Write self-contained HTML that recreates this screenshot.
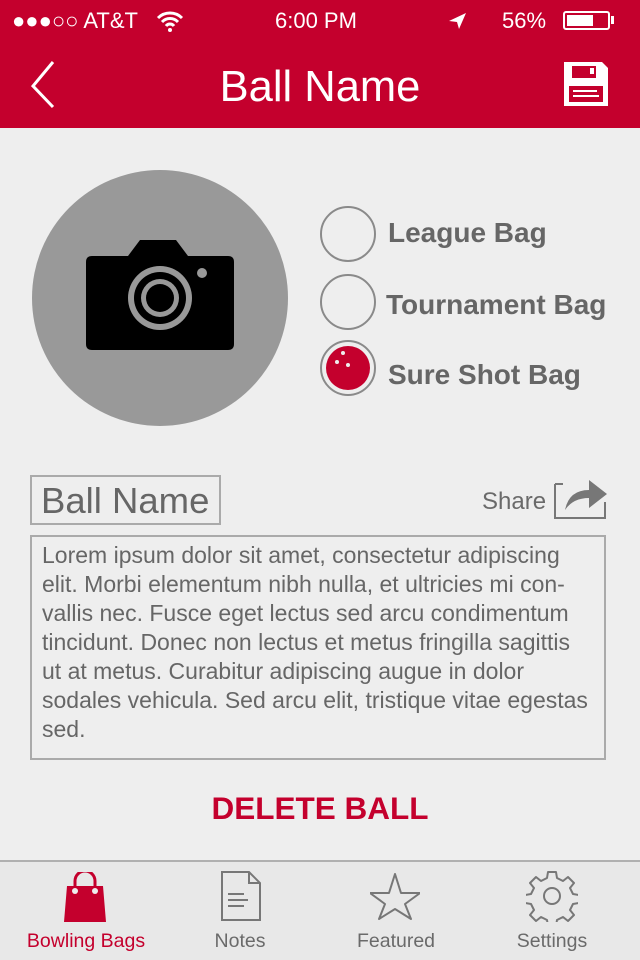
<!DOCTYPE html>
<html><head><meta charset="utf-8"><style>
*{margin:0;padding:0;box-sizing:border-box}
body{width:640px;height:960px;background:#eeeeee;font-family:"Liberation Sans",sans-serif;position:relative;overflow:hidden}
.abs{position:absolute}
.hdr{left:0;top:0;width:640px;height:128px;background:#c4002d;color:#fff}
.radio{width:56px;height:56px;border-radius:50%;border:2px solid #8a8a8a;left:320px}
.rl{left:388px;font-weight:bold;font-size:28px;color:#666}
.tab{top:930px;font-size:19.5px;color:#6a6a6a;text-align:center;width:160px}
</style></head><body>
<div class="abs hdr">
 <div class="abs" style="left:12px;top:8px;font-size:22px">●●●○○ AT&amp;T</div>
 <svg class="abs" style="left:155px;top:10px" width="30" height="22" viewBox="0 0 30 22"><path d="M3 8a17 17 0 0 1 24 0M7 12a11 11 0 0 1 16 0M11 16a5 5 0 0 1 8 0" stroke="#fff" stroke-width="3" fill="none"/><circle cx="15" cy="20" r="2" fill="#fff"/></svg>
 <div class="abs" style="left:275px;top:8px;font-size:22px">6:00 PM</div>
 <svg class="abs" style="left:448px;top:12px" width="20" height="18"><path d="M18 1L1 9l8 1 2 7z" fill="#fff"/></svg>
 <div class="abs" style="left:502px;top:8px;font-size:22px">56%</div>
 <div class="abs" style="left:563px;top:11px;width:47px;height:19px;border:2px solid #fff;border-radius:3px"><div style="margin:2px;width:26px;height:11px;background:#fff"></div></div>
 <div class="abs" style="left:611px;top:16px;width:3px;height:8px;background:#fff"></div>
 <svg class="abs" style="left:28px;top:60px" width="30" height="50"><path d="M25 2L5 26l20 21" stroke="#fff" stroke-width="3" fill="none"/></svg>
 <div class="abs" style="left:0;width:640px;top:63px;text-align:center;font-size:43.5px">Ball Name</div>
 <svg class="abs" style="left:562px;top:60px" width="48" height="48"><path d="M2 2h38l6 6v38H2z" fill="#fff"/><rect x="10" y="6" width="24" height="12" fill="#c4002d"/><rect x="28" y="8" width="4" height="6" fill="#fff"/><rect x="7" y="26" width="34" height="16" fill="#c4002d"/><rect x="11" y="30" width="24" height="2" fill="#fff"/><rect x="11" y="35" width="26" height="2" fill="#fff"/></svg>
</div>
<div class="abs" style="left:32px;top:170px;width:256px;height:256px;border-radius:50%;background:#999"></div>
<svg class="abs" style="left:86px;top:240px" width="148" height="110"><path d="M0 22q0-6 6-6h36l12-16h36l12 16h40q6 0 6 6v82q0 6-6 6H6q-6 0-6-6z" fill="#000"/><circle cx="74" cy="58" r="32" fill="#999"/><circle cx="74" cy="58" r="26" fill="#000"/><circle cx="74" cy="58" r="19" fill="#999"/><circle cx="74" cy="58" r="14" fill="#000"/><circle cx="116" cy="33" r="5" fill="#999"/></svg>
<div class="abs radio" style="top:206px"></div>
<div class="abs rl" style="top:217px">League Bag</div>
<div class="abs radio" style="top:274px"></div>
<div class="abs rl" style="top:289px;left:386px">Tournament Bag</div>
<div class="abs radio" style="top:340px"><div style="margin:4px;width:44px;height:44px;border-radius:50%;background:#c4002d;position:relative"><span style="position:absolute;left:15px;top:5px;width:4px;height:4px;background:#eee;border-radius:50%"></span><span style="position:absolute;left:9px;top:14px;width:4px;height:4px;background:#eee;border-radius:50%"></span><span style="position:absolute;left:20px;top:17px;width:4px;height:4px;background:#eee;border-radius:50%"></span></div></div>
<div class="abs rl" style="top:359px">Sure Shot Bag</div>
<div class="abs" style="left:30px;top:475px;width:191px;height:50px;border:2px solid #aaa;font-size:36.5px;color:#666;padding-left:9px;line-height:48px;white-space:nowrap">Ball Name</div>
<div class="abs" style="left:482px;top:488px;font-size:24px;color:#6a6a6a">Share</div>
<svg class="abs" style="left:553px;top:472px" width="56" height="48"><path d="M2 12H10M2 12v34h50V30" stroke="#777" stroke-width="2" fill="none"/><path d="M12 38q4-20 24-20V8l18 14-18 14V26q-16 0-24 12z" fill="#777"/></svg>
<div class="abs" style="left:30px;top:535px;width:576px;height:225px;border:2px solid #aaa;padding:4px 10px;font-size:23px;line-height:29px;color:#666">Lorem ipsum dolor sit amet, consectetur adipiscing elit. Morbi elementum nibh nulla, et ultricies mi con-vallis nec. Fusce eget lectus sed arcu condimentum tincidunt. Donec non lectus et metus fringilla sagittis ut at metus. Curabitur adipiscing augue in dolor sodales vehicula. Sed arcu elit, tristique vitae egestas sed.</div>
<div class="abs" style="left:0;width:640px;top:790px;text-align:center;font-size:31.5px;font-weight:bold;color:#c4002d">DELETE BALL</div>
<div class="abs" style="left:0;top:860px;width:640px;height:100px;background:#e8e8e8;border-top:2px solid #b0b0b0"></div>
<svg class="abs" style="left:62px;top:872px" width="48" height="52"><path d="M5 14h36l3 36H2z" fill="#c4002d"/><path d="M13 18V9a10 10 0 0 1 20 0v9" stroke="#c4002d" stroke-width="3" fill="none"/><circle cx="13" cy="19" r="3" fill="#eee"/><circle cx="33" cy="19" r="3" fill="#eee"/></svg>
<svg class="abs" style="left:220px;top:870px" width="42" height="52"><path d="M2 2h27l11 11v37H2z M29 2v11h11" stroke="#777" stroke-width="2" fill="none"/><path d="M8 24h16M8 30h20M8 36h16" stroke="#777" stroke-width="2"/></svg>
<svg class="abs" style="left:370px;top:872px" width="50" height="48"><path d="M25 2l6 19h19l-15 11 6 15-16-10-16 10 6-15L0 21h19z" stroke="#777" stroke-width="2" fill="none" stroke-linejoin="round"/></svg>
<svg class="abs" style="left:526px;top:870px" width="52" height="52" viewBox="-26 -26 52 52"><path d="M-4-24h8l1 6 6 3 5-4 6 6-4 5 3 6 6 1v8l-6 1-3 6 4 5-6 6-5-4-6 3-1 6h-8l-1-6-6-3-5 4-6-6 4-5-3-6-6-1v-8l6-1 3-6-4-5 6-6 5 4 6-3z" stroke="#777" stroke-width="2" fill="none" stroke-linejoin="round"/><circle r="8" stroke="#777" stroke-width="2" fill="none"/></svg>
<div class="abs tab" style="left:6px;color:#c4002d">Bowling Bags</div>
<div class="abs tab" style="left:160px">Notes</div>
<div class="abs tab" style="left:316px">Featured</div>
<div class="abs tab" style="left:472px">Settings</div>
</body></html>
